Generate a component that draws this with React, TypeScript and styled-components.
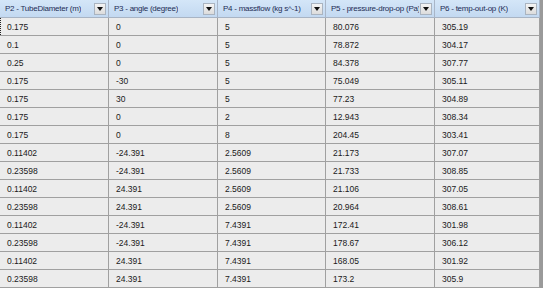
import React from 'react';
import styled, { createGlobalStyle } from 'styled-components';

const GlobalStyle = createGlobalStyle`
  html, body {
    margin: 0;
    padding: 0;
    background: #9a9a9a;
  }
  body {
    font-family: 'Liberation Sans', Arial, sans-serif;
  }
`;

const columns = [
  'P2 - TubeDiameter (m)',
  'P3 - angle (degree)',
  'P4 - massflow (kg s^-1)',
  'P5 - pressure-drop-op (Pa)',
  'P6 - temp-out-op (K)'
];

const rows = [
  ['0.175', '0', '5', '80.076', '305.19'],
  ['0.1', '0', '5', '78.872', '304.17'],
  ['0.25', '0', '5', '84.378', '307.77'],
  ['0.175', '-30', '5', '75.049', '305.11'],
  ['0.175', '30', '5', '77.23', '304.89'],
  ['0.175', '0', '2', '12.943', '308.34'],
  ['0.175', '0', '8', '204.45', '303.41'],
  ['0.11402', '-24.391', '2.5609', '21.173', '307.07'],
  ['0.23598', '-24.391', '2.5609', '21.733', '308.85'],
  ['0.11402', '24.391', '2.5609', '21.106', '307.05'],
  ['0.23598', '24.391', '2.5609', '20.964', '308.61'],
  ['0.11402', '-24.391', '7.4391', '172.41', '301.98'],
  ['0.23598', '-24.391', '7.4391', '178.67', '306.12'],
  ['0.11402', '24.391', '7.4391', '168.05', '301.92'],
  ['0.23598', '24.391', '7.4391', '173.2', '305.9']
];

const gridCols = '109px 109px 108px 109px 105px';

const Table = styled.div`
  width: 540px;
  height: 288px;
  background: #ececec;
  overflow: hidden;
`;

const HeaderRow = styled.div`
  display: grid;
  grid-template-columns: ${gridCols};
  height: 18px;
  background: linear-gradient(#d4e6f8, #c3d9f1);
  border-bottom: 1px solid #a8b4c4;
  box-sizing: border-box;
`;

const HeaderCell = styled.div`
  display: flex;
  align-items: center;
  justify-content: space-between;
  gap: 1px;
  padding: 0 2px 0 5px;
  border-right: 1px solid #a9b6c8;
  color: #1d2d55;
  font-size: 8px;
  letter-spacing: -0.25px;
  white-space: nowrap;
  overflow: hidden;
  box-sizing: border-box;
`;

const HeaderLabel = styled.span`
  overflow: hidden;
`;

const DropButton = styled.div`
  flex: none;
  width: 12px;
  height: 12px;
  box-sizing: border-box;
  border: 1px solid #aab4c0;
  background: linear-gradient(#f4f4f4, #dcdcdc);
  display: flex;
  align-items: center;
  justify-content: center;
`;

const Row = styled.div`
  display: grid;
  grid-template-columns: ${gridCols};
  height: 18px;
  border-bottom: 1px solid #a0a0a0;
  box-sizing: border-box;
`;

const Cell = styled.div<{ $focus?: boolean }>`
  display: flex;
  align-items: center;
  padding-left: ${(p) => (p.$focus ? '6px' : '7px')};
  border-right: 1px solid #a0a0a0;
  border-left: ${(p) => (p.$focus ? '1px dotted #222' : 'none')};
  color: #1a1a1a;
  font-size: 8.5px;
  white-space: nowrap;
  overflow: hidden;
  box-sizing: border-box;
`;

const Arrow = () => (
  <svg width="6" height="4" viewBox="0 0 6 4">
    <path d="M0 0 H6 L3 4 Z" fill="#111" />
  </svg>
);

export default function App() {
  return (
    <>
      <GlobalStyle />
      <Table>
        <HeaderRow>
          {columns.map((c) => (
            <HeaderCell key={c}>
              <HeaderLabel>{c}</HeaderLabel>
              <DropButton>
                <Arrow />
              </DropButton>
            </HeaderCell>
          ))}
        </HeaderRow>
        {rows.map((r, i) => (
          <Row key={i}>
            {r.map((v, j) => (
              <Cell key={j} $focus={i === 0 && j === 0}>
                {v}
              </Cell>
            ))}
          </Row>
        ))}
      </Table>
    </>
  );
}
